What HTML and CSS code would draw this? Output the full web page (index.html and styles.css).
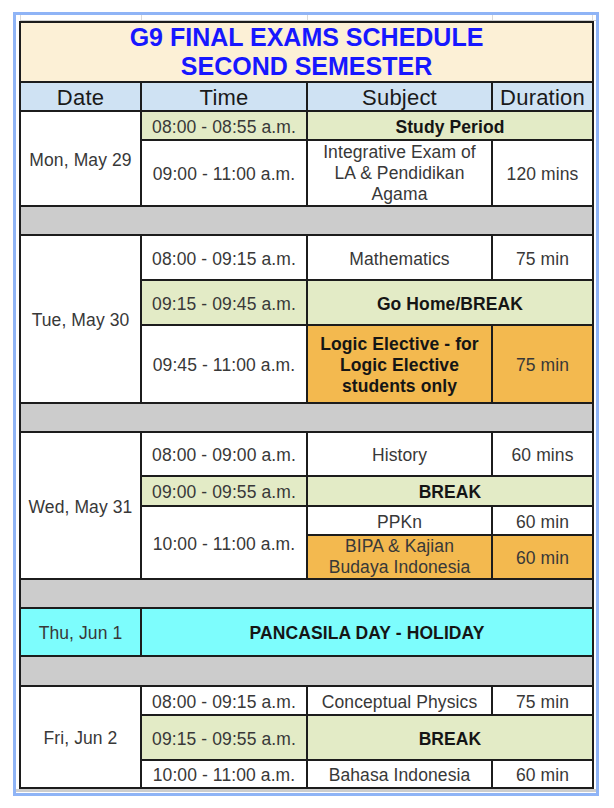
FILE: index.html
```html
<!DOCTYPE html>
<html lang="en">
<head>
<meta charset="utf-8">
<title>G9 Final Exams Schedule</title>
<link rel="stylesheet" href="styles.css">
</head>
<body>
<div class="frame">
  <div class="ghost"><span></span><span></span><span></span><span></span></div>
  <table class="sched">
    <colgroup>
      <col class="c-date"><col class="c-time"><col class="c-subj"><col class="c-dur">
    </colgroup>
    <tr class="h60"><td colspan="4" class="title">G9 FINAL EXAMS SCHEDULE<br>SECOND SEMESTER</td></tr>
    <tr class="h29 head"><th>Date</th><th>Time</th><th>Subject</th><th>Duration</th></tr>

    <tr class="h29">
      <td rowspan="2">Mon, May 29</td>
      <td class="green">08:00 - 08:55 a.m.</td>
      <td colspan="2" class="green bold">Study Period</td>
    </tr>
    <tr class="h66">
      <td>09:00 - 11:00 a.m.</td>
      <td class="tight">Integrative Exam of LA &amp; Pendidikan Agama</td>
      <td>120 mins</td>
    </tr>
    <tr class="h29"><td colspan="4" class="gap"></td></tr>

    <tr class="h45">
      <td rowspan="3">Tue, May 30</td>
      <td>08:00 - 09:15 a.m.</td>
      <td>Mathematics</td>
      <td>75 min</td>
    </tr>
    <tr class="h45">
      <td class="green">09:15 - 09:45 a.m.</td>
      <td colspan="2" class="green bold">Go Home/BREAK</td>
    </tr>
    <tr class="h78">
      <td>09:45 - 11:00 a.m.</td>
      <td class="orange bold">Logic Elective - for Logic Elective students only</td>
      <td class="orange">75 min</td>
    </tr>
    <tr class="h29"><td colspan="4" class="gap"></td></tr>

    <tr class="h44">
      <td rowspan="4">Wed, May 31</td>
      <td>08:00 - 09:00 a.m.</td>
      <td>History</td>
      <td>60 mins</td>
    </tr>
    <tr class="h30">
      <td class="green">09:00 - 09:55 a.m.</td>
      <td colspan="2" class="green bold">BREAK</td>
    </tr>
    <tr class="h29">
      <td rowspan="2">10:00 - 11:00 a.m.</td>
      <td>PPKn</td>
      <td>60 min</td>
    </tr>
    <tr class="h44">
      <td class="orange flush">BIPA &amp; Kajian Budaya Indonesia</td>
      <td class="orange">60 min</td>
    </tr>
    <tr class="h29"><td colspan="4" class="gap"></td></tr>

    <tr class="h48">
      <td class="cyan">Thu, Jun 1</td>
      <td colspan="3" class="cyan bold">PANCASILA DAY - HOLIDAY</td>
    </tr>
    <tr class="h30"><td colspan="4" class="gap"></td></tr>

    <tr class="h29">
      <td rowspan="3">Fri, Jun 2</td>
      <td>08:00 - 09:15 a.m.</td>
      <td>Conceptual Physics</td>
      <td>75 min</td>
    </tr>
    <tr class="h45">
      <td class="green">09:15 - 09:55 a.m.</td>
      <td colspan="2" class="green bold">BREAK</td>
    </tr>
    <tr class="h28">
      <td>10:00 - 11:00 a.m.</td>
      <td>Bahasa Indonesia</td>
      <td>60 min</td>
    </tr>
  </table>
  <div class="tail"></div>
</div>
</body>
</html>
```

FILE: styles.css
```css
html, body {
  margin: 0;
  padding: 0;
  background: #ffffff;
}

body {
  font-family: "Liberation Sans", Arial, sans-serif;
}

.frame {
  margin: 12px 0 0 13px;
  width: 580px;
  border: 3px solid #8fb4f6;
  background: #ffffff;
}

.ghost {
  display: grid;
  grid-template-columns: 121px 166px 185px 101px;
  height: 5px;
  margin-left: 4px;
  border-bottom: 1px solid #cfcfcf;
}

.ghost span {
  border-left: 1px solid #d9d9d9;
}

.ghost span:last-child {
  border-right: 1px solid #d9d9d9;
}

.sched {
  border-collapse: collapse;
  table-layout: fixed;
  width: 575px;
  margin-left: 3px;
}

.c-date { width: 121px; }
.c-time { width: 166px; }
.c-subj { width: 185px; }
.c-dur  { width: 101px; }

.sched td,
.sched th {
  border: 2px solid #1c1c1c;
  padding: 3px 7px 0;
  text-align: center;
  vertical-align: middle;
  font-size: 17.5px;
  letter-spacing: 0.1px;
  line-height: 21px;
  color: #383838;
  font-weight: normal;
  background: #ffffff;
}

.sched .tight {
  padding-top: 1px;
}

.sched .flush {
  padding-top: 0;
}

.sched .title {
  padding: 0 7px;
  background: #fcf0d6;
  color: #1717ff;
  font-weight: bold;
  font-size: 25px;
  line-height: 29px;
  letter-spacing: 0;
}

.sched .head th {
  padding: 1px 4px 0;
  background: #cfe2f3;
  color: #1a1a1a;
  font-size: 22px;
  letter-spacing: 0.2px;
}

.sched .green { background: #e3ebc6; }
.sched .orange { background: #f3b94f; }
.sched .cyan { background: #7dfdfd; }
.sched .gap { background: #cccccc; padding: 0; }

.sched .bold {
  font-weight: bold;
  color: #151515;
}

.h28 { height: 28px; }
.h29 { height: 29px; }
.h30 { height: 30px; }
.h44 { height: 44px; }
.h45 { height: 45px; }
.h48 { height: 48px; }
.h60 { height: 60px; }
.h66 { height: 66px; }
.h78 { height: 78px; }

.tail {
  height: 1px;
  border-top: 3px solid #cdcdcd;
}
```
